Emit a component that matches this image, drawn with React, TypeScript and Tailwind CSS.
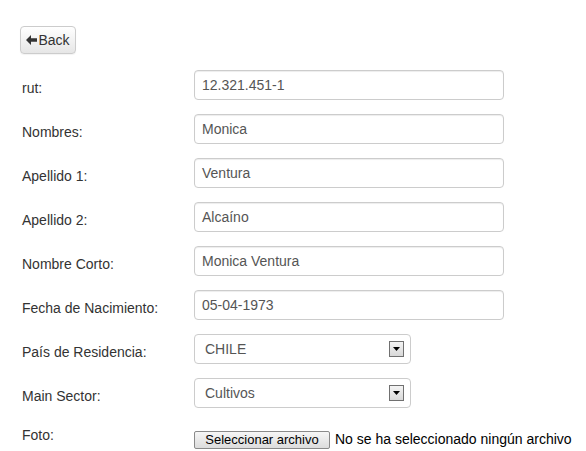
import React from "react";

const fields = [
  { label: "rut:", value: "12.321.451-1" },
  { label: "Nombres:", value: "Monica" },
  { label: "Apellido 1:", value: "Ventura" },
  { label: "Apellido 2:", value: "Alcaíno" },
  { label: "Nombre Corto:", value: "Monica Ventura" },
  { label: "Fecha de Nacimiento:", value: "05-04-1973" },
];

const selects = [
  { label: "País de Residencia:", value: "CHILE" },
  { label: "Main Sector:", value: "Cultivos" },
];

function Label({ children }: { children: React.ReactNode }) {
  return <div className="w-[174px] pl-[2px] pt-[8px] text-[14px] leading-[20px] text-[#333]">{children}</div>;
}

function SelectBox({ value }: { value: string }) {
  return (
    <div className="flex h-[30px] w-[217px] items-center justify-between rounded-[4px] border border-[#ccc] pl-[10px] pr-[6px] text-[14px] text-[#555]">
      <span>{value}</span>
      <span className="flex h-[16px] w-[15px] items-center justify-center border border-[#707070] bg-gradient-to-b from-[#f4f4f4] to-[#d8d8d8]">
        <svg width="7" height="4" viewBox="0 0 7 4">
          <path d="M0 0h7L3.5 4z" fill="#000" />
        </svg>
      </span>
    </div>
  );
}

export default function App() {
  return (
    <div className="min-h-[451px] bg-white pl-[20px] pt-[26px] font-['Liberation_Sans',Arial,sans-serif]">
      <button className="flex h-[28px] w-[56px] items-center justify-center rounded-[4px] border border-[#ccc] bg-gradient-to-b from-white to-[#e6e6e6] text-[14px] text-[#333] shadow-[0_1px_1px_rgba(0,0,0,0.05)]">
        <svg width="11" height="10" viewBox="0 0 11 10" className="mr-[1px]">
          <path d="M0 5L5 0v3.2h6v3.6H5V10z" fill="#333" />
        </svg>
        Back
      </button>

      <div className="mt-[16px] flex flex-col gap-[14px]">
        {fields.map((f) => (
          <div key={f.label} className="flex">
            <Label>{f.label}</Label>
            <div className="flex h-[30px] w-[310px] items-center rounded-[4px] border border-[#ccc] px-[7px] text-[14px] text-[#555] shadow-[inset_0_1px_1px_rgba(0,0,0,0.075)]">
              {f.value}
            </div>
          </div>
        ))}
        {selects.map((s) => (
          <div key={s.label} className="flex">
            <Label>{s.label}</Label>
            <SelectBox value={s.value} />
          </div>
        ))}
        <div className="flex">
          <div className="w-[174px] pl-[2px] pt-[3px] text-[14px] leading-[20px] text-[#333]">Foto:</div>
          <div className="mt-[7px] flex items-center">
            <span className="flex h-[18px] w-[136px] items-center justify-center rounded-[2px] border border-[#8a8a8a] bg-gradient-to-b from-[#f6f6f6] to-[#dcdcdc] text-[13px] text-black">
              Seleccionar archivo
            </span>
            <span className="ml-[5px] text-[14px] text-black">No se ha seleccionado ningún archivo</span>
          </div>
        </div>
      </div>
    </div>
  );
}
